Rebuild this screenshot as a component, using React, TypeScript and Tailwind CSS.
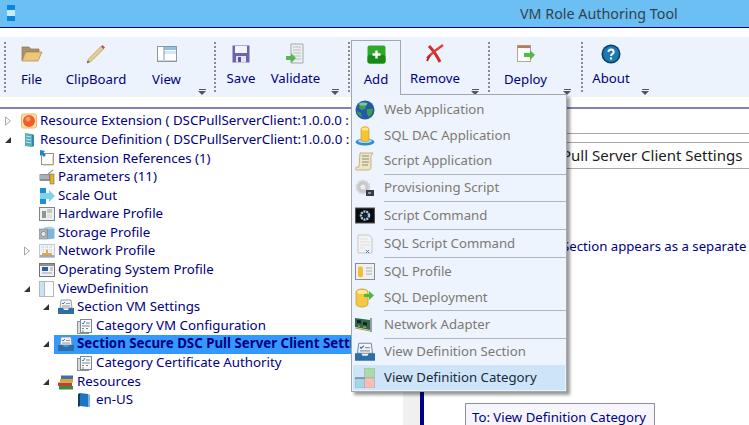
import type { ReactNode } from "react";

const Ico = ({ children, s = 16, vb = 16 }: { children: ReactNode; s?: number; vb?: number }) => (
  <svg width={s} height={s} viewBox={`0 0 ${vb} ${vb}`} className="shrink-0">
    {children}
  </svg>
);

// toolbar icons
const FolderIcon = () => (
  <Ico s={22} vb={22}>
    <path d="M1 4h7l2 2h8v3H4L1 17z" fill="#a8926a" stroke="#8a7550" strokeWidth="0.7" />
    <path d="M5 9h16l-4 9H1z" fill="#ecc67a" stroke="#a8863f" strokeWidth="0.7" />
  </Ico>
);
const PencilIcon = () => (
  <Ico s={22} vb={22}>
    <path d="M2 20l1.500-4L16 3.500l2.500 2.500L6 18.500z" fill="#e8cf8f" stroke="#a89560" strokeWidth="0.7" />
    <path d="M16 3.500l1.500-1.500 2.500 2.500-1.500 1.500z" fill="#b5584f" />
    <path d="M2 20l.800-2.500 1.700 1.700z" fill="#555" />
  </Ico>
);
const ViewIcon = () => (
  <Ico s={20} vb={20}>
    <rect x="0.500" y="2.500" width="19" height="15" fill="#fff" stroke="#8c98a6" />
    <rect x="7" y="3" width="12" height="3" fill="#8fc0ea" />
    <rect x="7" y="7" width="12" height="3" fill="#d5e6f6" />
    <path d="M7 3v14" stroke="#8c98a6" />
    <path d="M1 16.500h18" stroke="#cfd6de" />
  </Ico>
);
const SaveIcon = () => (
  <Ico s={18} vb={18}>
    <rect x="0.500" y="0.500" width="17" height="17" fill="#6e62ad" />
    <rect x="3" y="1" width="12" height="7" fill="#f4f2fb" />
    <rect x="4" y="11" width="10" height="6.500" fill="#e4e2ee" />
    <rect x="6" y="12" width="3" height="5" fill="#5d5496" />
  </Ico>
);
const ValidateIcon = () => (
  <Ico s={22} vb={22}>
    <path d="M6 1h12v19H6z" fill="#eef0f0" stroke="#a0aba8" />
    <path d="M8 4h8M8 7h8M8 10h8M8 13h8M8 16h8" stroke="#b6bfc4" />
    <path d="M1 13h5v-3l5 5-5 5v-3H1z" fill="#58b84e" />
  </Ico>
);
const AddIcon = () => (
  <Ico s={19} vb={19}>
    <rect x="0.500" y="0.500" width="18" height="18" rx="2" fill="#2fa92a" />
    <rect x="0.500" y="10" width="18" height="8.500" rx="2" fill="#1a8a17" />
    <path d="M9.500 5.500v8M5.500 9.500h8" stroke="#fff" strokeWidth="2.400" />
  </Ico>
);
const RemoveIcon = () => (
  <Ico s={20} vb={20}>
    <path d="M4 2c4 4 8 10 11 16" stroke="#d22a2a" strokeWidth="3" fill="none" />
    <path d="M18 1C12 5 7 9 2 14" stroke="#e23a3a" strokeWidth="2.400" fill="none" />
    <path d="M5 11L2 17" stroke="#c82020" strokeWidth="2" />
  </Ico>
);
const DeployIcon = () => (
  <Ico s={20} vb={20}>
    <rect x="1.500" y="1.500" width="13" height="16" fill="#fcfbf7" stroke="#b0a79c" />
    <rect x="1.500" y="1.500" width="13" height="2.500" fill="#b67d58" />
    <path d="M8 9h6V6l5 5-5 5v-3H8z" fill="#55b94a" />
  </Ico>
);
const AboutIcon = () => (
  <Ico s={20} vb={20}>
    <circle cx="10" cy="10" r="9.500" fill="#0c3c62" />
    <circle cx="10" cy="10" r="8" fill="#1a7ab2" />
    <path d="M7.500 8c0-3.400 5.200-3.400 5.200 0 0 2-2.700 2-2.700 4" stroke="#fff" strokeWidth="2" fill="none" />
    <rect x="9" y="13.500" width="2" height="2" fill="#fff" />
  </Ico>
);

// tree icons
const OrangeBall = () => (
  <Ico>
    <rect x="0.500" y="1" width="15" height="14" rx="2" fill="#fbe0ae" stroke="#eab765" />
    <circle cx="8" cy="8" r="6" fill="#ec5f2a" />
    <circle cx="7" cy="6" r="2.500" fill="#f79a63" />
  </Ico>
);
const ServerDoc = () => (
  <Ico>
    <path d="M4 1l7 1v13l-7-1z" fill="#57aebb" />
    <path d="M11 2l2 1v11l-2 1z" fill="#3a8597" />
    <path d="M5 4l5 1M5 7l5 1M5 10l5 1" stroke="#c4e7ec" />
  </Ico>
);
const ExtRefIcon = () => (
  <Ico>
    <rect x="2.500" y="3.500" width="12" height="11" fill="#fff" stroke="#8f8f8f" />
    <path d="M14 5v10H4" stroke="#c9b78f" fill="none" />
    <path d="M1 0l5 1-1.500 1.500L7 5 5 7 2.500 4.500 1 6z" fill="#1b86c9" />
  </Ico>
);
const ParamsIcon = () => (
  <Ico>
    <rect x="0.500" y="5" width="11" height="7" rx="1" fill="#8b9098" />
    <path d="M1 7h9M1 9h9" stroke="#c9ccd1" />
    <rect x="11" y="5" width="4" height="10" fill="#e2b33b" stroke="#8a6b1f" strokeWidth="0.600" />
    <path d="M9 5l5-4" stroke="#9aa0a6" strokeWidth="1.500" />
  </Ico>
);
const ScaleIcon = () => (
  <Ico>
    <rect x="1" y="0" width="6" height="7" fill="#1c8fd6" />
    <rect x="1" y="9" width="6" height="7" fill="#1c8fd6" />
    <path d="M1 5h9V2l6 6-6 6v-3H1z" fill="#7ed3ea" />
  </Ico>
);
const HardwareIcon = () => (
  <Ico>
    <rect x="0.500" y="1.500" width="15" height="13" fill="#eef0f0" stroke="#7d8388" />
    <rect x="3" y="5" width="4" height="7" fill="#8b9a8c" />
    <rect x="8" y="3" width="5" height="4" fill="#c3c9c4" />
    <rect x="8" y="8" width="5" height="4" fill="#dfe3df" />
  </Ico>
);
const StorageIcon = () => (
  <Ico>
    <ellipse cx="10" cy="4" rx="5.500" ry="2.500" fill="#a9d3ec" />
    <path d="M4.500 4v9c0 1.500 11 1.500 11 0V4z" fill="#7fb5d6" />
    <rect x="0.500" y="4" width="8" height="10" fill="#aeb4ba" stroke="#787e84" strokeWidth="0.600" />
    <circle cx="4.500" cy="9" r="2.500" fill="#e6e9ec" stroke="#666" strokeWidth="0.600" />
  </Ico>
);
const NetworkIcon = () => (
  <Ico>
    <rect x="0.500" y="1.500" width="15" height="13" fill="#f4f6fa" stroke="#c3c9d2" />
    <path d="M2 4h12M2 7h12M4 2v8M8 2v8M12 2v8" stroke="#c8cfdb" strokeDasharray="1 1" />
    <path d="M7 7h2v3h4v2H3v-2h4z" fill="#e9a935" />
    <path d="M1 13h14" stroke="#7d8fa8" strokeWidth="1.500" />
  </Ico>
);
const OsIcon = () => (
  <Ico>
    <rect x="0.500" y="1.500" width="15" height="13" fill="#f1f2f3" stroke="#6f7478" />
    <rect x="1" y="2" width="14" height="2" fill="#8d9297" />
    <rect x="3" y="5" width="6" height="4" fill="#2a5ea8" />
    <path d="M11 6h3M11 8h3M3 11h10" stroke="#9aa0a6" />
  </Ico>
);
const ViewDefIcon = () => (
  <Ico>
    <rect x="0.500" y="0.500" width="14" height="15" fill="#fbfbfc" stroke="#b3b8bd" />
    <rect x="1" y="1" width="4" height="14" fill="#c8e3f3" />
    <path d="M5.500 1v14" stroke="#b3b8bd" />
  </Ico>
);
const SectionIcon = ({ s = 16 }: { s?: number }) => (
  <Ico s={s}>
    <path d="M3 1h10l1 8H2z" fill="#f3f5f7" stroke="#7d8894" strokeWidth="0.800" />
    <path d="M4 4l1 1 2-2" stroke="#2b7cc7" fill="none" />
    <path d="M8 4.500h4M4 7h8" stroke="#8d98a4" />
    <path d="M0 9h5l1 2h4l1-2h5v6H0z" fill="#2f6ea5" />
  </Ico>
);
const CategoryIcon = () => (
  <Ico>
    <rect x="0.500" y="3.500" width="11" height="12" fill="#d8dce0" stroke="#8d9299" />
    <rect x="3.500" y="1.500" width="11" height="13" fill="#f7f8fa" stroke="#7d8894" />
    <path d="M5 5l1 1 2-3" stroke="#2b7cc7" fill="none" />
    <path d="M9 5h4M5 8h8M5 10.500h2M9 10.500h2M5 13h2" stroke="#7d8894" />
  </Ico>
);
const BooksIcon = () => (
  <Ico>
    <rect x="1" y="12" width="14" height="3.500" fill="#3b8a3d" />
    <rect x="0" y="8.500" width="14" height="3.500" fill="#b74437" />
    <rect x="2" y="5" width="13" height="3.500" fill="#d9a63a" />
    <rect x="3" y="1.500" width="12" height="3.500" fill="#3f6fb3" />
  </Ico>
);
const BookIcon = () => (
  <Ico>
    <path d="M3 1l8 1v13l-8-1z" fill="#1f74c4" />
    <path d="M3 1L1 2v13l2-1z" fill="#123a66" />
    <path d="M11 2l2 1v12l-2 0z" fill="#7cb3e2" />
  </Ico>
);

// menu icons
const GlobeIcon = () => (
  <Ico s={20} vb={20}>
    <circle cx="10" cy="10" r="9.500" fill="#2458a8" />
    <path d="M5 3c3-1 6-1 8 0l-2 3-1 3-3 1-3-2zM12 9l6 0c0 3-2 6-4 8l-2-3zM2 11l4 2 1 4C4 16 2 14 2 11z" fill="#3fa043" />
    <ellipse cx="8" cy="4" rx="4" ry="1.500" fill="#9cd0ef" opacity="0.700" />
  </Ico>
);
const SqlDacIcon = () => (
  <Ico s={20} vb={20}>
    <ellipse cx="10" cy="16" rx="9.500" ry="3.500" fill="#2b8bd4" />
    <ellipse cx="10" cy="15" rx="7" ry="2" fill="#a8d8f4" />
    <path d="M6 3c0-3 8-3 8 0v11c0 2-8 2-8 0z" fill="#f4c431" stroke="#c8962b" strokeWidth="0.600" />
    <ellipse cx="10" cy="3" rx="3.500" ry="1.500" fill="#fde58a" />
  </Ico>
);
const ScrollIcon = () => (
  <Ico s={20} vb={20}>
    <path d="M5 2h13l-2 3v11c0 2-1 3-3 3H2c-2 0-2-3 0-3h2z" fill="#efe5c3" stroke="#b5a67a" strokeWidth="0.800" />
    <path d="M7 5h7M7 8h7M7 11h7M7 14h6" stroke="#8f8a78" />
  </Ico>
);
const GearIcon = () => (
  <Ico s={20} vb={20}>
    <circle cx="8" cy="9" r="6.500" fill="#c6c8c9" stroke="#d8d9da" strokeWidth="2" strokeDasharray="2.500 1.500" />
    <circle cx="8" cy="9" r="2.500" fill="#eceded" />
    <rect x="11" y="12" width="8" height="6" fill="#3a3d40" />
    <path d="M13 15h3" stroke="#eee" />
  </Ico>
);
const ScriptCmdIcon = () => (
  <Ico s={20} vb={20}>
    <rect x="0.500" y="2" width="19" height="15" fill="#0a0c10" stroke="#555" />
    <circle cx="10" cy="9.500" r="4" fill="none" stroke="#9fc7e6" strokeWidth="2.500" strokeDasharray="2 0.800" />
    <circle cx="10" cy="9.500" r="1.500" fill="#18344d" />
  </Ico>
);
const SqlScriptIcon = () => (
  <Ico s={20} vb={20}>
    <path d="M3 1h11l3 3v15H3z" fill="#f2f3f4" stroke="#c5c8cc" />
    <path d="M5 5h8M5 8h10M5 11h10M5 14h5" stroke="#dcdfe2" />
    <path d="M11 16l3 3M14 16l-3 3" stroke="#4b78b8" />
  </Ico>
);
const SqlProfileIcon = () => (
  <Ico s={20} vb={20}>
    <rect x="0.500" y="1.500" width="19" height="16" fill="#eef0f2" stroke="#8a8f94" />
    <path d="M3 6c0-2 5-2 5 0v8c0 1.500-5 1.500-5 0z" fill="#f3be38" />
    <path d="M11 6h6M11 9h6M11 12h6" stroke="#aab0b5" />
  </Ico>
);
const SqlDeployIcon = () => (
  <Ico s={20} vb={20}>
    <path d="M1 4c0-4 12-4 12 0v12c0 4-12 4-12 0z" fill="#f4c844" stroke="#c39a2c" strokeWidth="0.700" />
    <ellipse cx="7" cy="4" rx="5" ry="2" fill="#fcec9f" />
    <path d="M9 6h5V3l5 4.500-5 4.500V9H9z" fill="#4fb845" />
  </Ico>
);
const NicIcon = () => (
  <Ico s={20} vb={20}>
    <path d="M0 3l15 2v10L0 12z" fill="#2f6a4a" />
    <path d="M2 5l4 .6v3l-4-.6zM8 7l4 .6v3l-4-.6z" fill="#14241c" />
    <path d="M3 11l2 .3M8 12l3 .4" stroke="#c9b45a" />
    <path d="M16 3v14" stroke="#9a9fa3" strokeWidth="2" />
    <path d="M0 13l15 3" stroke="#b89a3a" />
  </Ico>
);
const CategoryTilesIcon = () => (
  <Ico s={20} vb={20}>
    <rect x="9.500" y="0" width="10" height="10" fill="#a9dca6" stroke="#9aa0a6" strokeWidth="0.500" />
    <rect x="0" y="10" width="9.500" height="10" fill="#a5d6e8" stroke="#9aa0a6" strokeWidth="0.500" />
    <rect x="9.500" y="10" width="10" height="10" fill="#f9bcb6" stroke="#9aa0a6" strokeWidth="0.500" />
    <path d="M0 10h9.500" stroke="#5c6670" />
  </Ico>
);

const Sep = () => (
  <div className="w-[2px] h-[50px] self-center shrink-0 border-l-2 border-dotted border-[#8a8a8a]" />
);
const More = () => (
  <div className="flex flex-col items-center self-end mb-[2px] gap-[1px] w-[8px] shrink-0">
    <div className="w-[7px] h-[1px] bg-[#555]" />
    <div className="w-0 h-0 border-l-[4px] border-r-[4px] border-t-[4px] border-l-transparent border-r-transparent border-t-[#555]" />
  </div>
);

function Tool({ icon, label, w, up }: { icon: ReactNode; label: string; w: string; up?: boolean }) {
  return (
    <div className={`flex flex-col items-center pt-[6px] shrink-0 ${w}`}>
      <div className="h-[22px] flex items-center justify-center">{icon}</div>
      <div className={`text-[13.2px] leading-[20px] ${up ? "mt-[3px]" : "mt-[4px]"}`}>{label}</div>
    </div>
  );
}

function Caret({ open }: { open?: boolean }) {
  if (open) {
    return (
      <svg width="8" height="8" viewBox="0 0 8 8" className="shrink-0">
        <path d="M7 1v6H1z" fill="#333" />
      </svg>
    );
  }
  return (
    <svg width="8" height="10" viewBox="0 0 8 10" className="shrink-0">
      <path d="M1.500 1l5 4-5 4z" fill="#fff" stroke="#a6a6a6" />
    </svg>
  );
}

type Row = { level: number; icon: ReactNode; label: string; caret?: "open" | "closed"; selected?: boolean };

const rows: Row[] = [
  { level: 0, icon: <OrangeBall />, label: "Resource Extension ( DSCPullServerClient:1.0.0.0 : Extension )", caret: "closed" },
  { level: 0, icon: <ServerDoc />, label: "Resource Definition ( DSCPullServerClient:1.0.0.0 : Extension )", caret: "open" },
  { level: 1, icon: <ExtRefIcon />, label: "Extension References (1)" },
  { level: 1, icon: <ParamsIcon />, label: "Parameters (11)" },
  { level: 1, icon: <ScaleIcon />, label: "Scale Out" },
  { level: 1, icon: <HardwareIcon />, label: "Hardware Profile" },
  { level: 1, icon: <StorageIcon />, label: "Storage Profile" },
  { level: 1, icon: <NetworkIcon />, label: "Network Profile", caret: "closed" },
  { level: 1, icon: <OsIcon />, label: "Operating System Profile" },
  { level: 1, icon: <ViewDefIcon />, label: "ViewDefinition", caret: "open" },
  { level: 2, icon: <SectionIcon />, label: "Section VM Settings", caret: "open" },
  { level: 3, icon: <CategoryIcon />, label: "Category VM Configuration" },
  { level: 2, icon: <SectionIcon />, label: "Section Secure DSC Pull Server Client Settings", caret: "open", selected: true },
  { level: 3, icon: <CategoryIcon />, label: "Category Certificate Authority" },
  { level: 2, icon: <BooksIcon />, label: "Resources", caret: "open" },
  { level: 3, icon: <BookIcon />, label: "en-US" },
];

const indent = ["pl-[4px]", "pl-[23px]", "pl-[42px]", "pl-[61px]"];

function TreeRow({ row }: { row: Row }) {
  return (
    <div className={`flex items-center h-[18.6px] whitespace-nowrap ${indent[row.level]}`}>
      <div className="w-[12px] flex justify-start shrink-0">
        {row.caret && <Caret open={row.caret === "open"} />}
      </div>
      <div className={`flex items-center gap-[3px] h-full ${row.selected ? "bg-[#3399ff] font-bold w-[360px] pr-1" : ""}`}>
        <span className={`flex ${row.level === 0 ? "ml-[5px]" : "ml-[4px]"}`}>{row.icon}</span>
        <span>{row.label}</span>
      </div>
    </div>
  );
}

function MenuItem({ icon, label, h, active }: { icon: ReactNode; label: string; h: string; active?: boolean }) {
  return (
    <div className={`flex items-center mx-[1px] pl-[2px] ${h} ${active ? "bg-[#cde4f9] text-[#1a2a3a]" : "text-[#7d7873]"}`}>
      <div className="w-[20px] flex justify-center shrink-0">{icon}</div>
      <span className="ml-[9px]">{label}</span>
    </div>
  );
}

const MenuSep = () => <div className="h-[1px] ml-[32px] bg-[#aeb6c2]" />;

function AddMenu() {
  return (
    <div className="absolute left-[1px] top-[57px] w-[216px] h-[298px] bg-[#edf4fd] border border-[#a3a8ad] pt-[1px] text-[13.2px] shadow-[3px_3px_3px_rgba(0,0,0,0.4)] z-10">
      <MenuItem icon={<GlobeIcon />} label="Web Application" h="h-[27px]" />
      <MenuItem icon={<SqlDacIcon />} label="SQL DAC Application" h="h-[25px]" />
      <MenuItem icon={<ScrollIcon />} label="Script Application" h="h-[26px]" />
      <MenuSep />
      <MenuItem icon={<GearIcon />} label="Provisioning Script" h="h-[26px]" />
      <MenuSep />
      <MenuItem icon={<ScriptCmdIcon />} label="Script Command" h="h-[27px]" />
      <MenuSep />
      <MenuItem icon={<SqlScriptIcon />} label="SQL Script Command" h="h-[27px]" />
      <MenuSep />
      <MenuItem icon={<SqlProfileIcon />} label="SQL Profile" h="h-[27px]" />
      <MenuItem icon={<SqlDeployIcon />} label="SQL Deployment" h="h-[25px]" />
      <MenuSep />
      <MenuItem icon={<NicIcon />} label="Network Adapter" h="h-[27px]" />
      <MenuSep />
      <MenuItem icon={<SectionIcon s={20} />} label="View Definition Section" h="h-[26px]" />
      <MenuItem icon={<CategoryTilesIcon />} label="View Definition Category" h="h-[25px]" active />
    </div>
  );
}

export default function App() {
  return (
    <div className="w-[749px] h-[425px] overflow-hidden bg-white flex flex-col text-[#000080] [font-family:'Noto_Sans',sans-serif]">
      <div className="h-[28px] shrink-0 bg-[#6bbff2] border-b border-[#00006e] flex items-center">
        <svg width="8" height="16" viewBox="0 0 8 16" className="ml-[7px] mb-[1px]">
          <rect width="8" height="16" fill="#0a86e0" />
          <rect y="5" width="8" height="6" fill="#c6ecf2" />
        </svg>
        <div className="ml-[505px] text-[14.3px] text-[#33424f] whitespace-nowrap">VM Role Authoring Tool</div>
      </div>

      <div className="h-[9px] shrink-0" />

      <div className="h-[60px] shrink-0 bg-[#edf3fc] flex pl-[4px]">
        <Sep />
        <div className="flex w-[208px] shrink-0">
          <Tool icon={<FolderIcon />} label="File" w="w-[51px]" />
          <Tool icon={<PencilIcon />} label="ClipBoard" w="w-[78px]" />
          <Tool icon={<ViewIcon />} label="View" w="w-[63px]" />
          <More />
        </div>
        <Sep />
        <div className="flex w-[132px] shrink-0">
          <Tool icon={<SaveIcon />} label="Save" w="w-[50px]" up />
          <Tool icon={<ValidateIcon />} label="Validate" w="w-[59px]" up />
          <div className="w-[6px]" />
          <More />
        </div>
        <Sep />
        <div className="flex w-[138px] shrink-0 relative">
          <div className="ml-[1px] w-[50px] h-[55px] mt-[3px] border border-b-0 border-[#a3a8ad] shrink-0 bg-[#edf3fc] relative z-20">
            <Tool icon={<AddIcon />} label="Add" w="w-[48px] !pt-[2px]" />
          </div>
          <AddMenu />
          <Tool icon={<RemoveIcon />} label="Remove" w="w-[68px]" up />
          <div className="w-[2px]" />
          <More />
        </div>
        <Sep />
        <div className="flex w-[91px] shrink-0">
          <Tool icon={<DeployIcon />} label="Deploy" w="w-[71px]" />
          <div className="w-[2px]" />
          <More />
        </div>
        <Sep />
        <div className="flex">
          <Tool icon={<AboutIcon />} label="About" w="w-[56px]" up />
          <div className="w-[2px]" />
          <More />
        </div>
      </div>

      <div className="h-[10px] shrink-0" />
      <div className="h-[2px] shrink-0 bg-[#8080c0]" />

      <div className="flex flex-1 min-h-0">
        <div className="w-[403px] shrink-0 overflow-hidden pt-[3px] text-[13.3px]">
          {rows.map((row) => (
            <TreeRow key={row.label} row={row} />
          ))}
        </div>
        <div className="w-[17px] shrink-0 bg-[#f0f0f0]" />
        <div className="w-[4px] shrink-0 bg-[#00008b]" />
        <div className="flex-1 min-w-0 flex flex-col">
          <div className="h-[25px] shrink-0 border-b border-[#a8a8a8]" />
          <div className="h-[8px] shrink-0" />
          <div className="h-[27px] shrink-0 border-y border-[#a8a8a8] pl-[138px] flex items-center text-[15px] text-[#1a1a1a] whitespace-nowrap">
            Pull Server Client Settings
          </div>
          <div className="h-[67px] shrink-0" />
          <div className="h-[20px] shrink-0 pl-[138px] text-[13.2px] leading-[20px] whitespace-nowrap">
            Section appears as a separate
          </div>
          <div className="h-[147px] shrink-0" />
          <div className="ml-[41px] w-[190px] h-[40px] shrink-0 border border-[#8f8f9a] bg-[#f5f5fb] px-[6px] pt-[4px] text-[13.2px] whitespace-nowrap">
            To: View Definition Category
          </div>
        </div>
      </div>
    </div>
  );
}
